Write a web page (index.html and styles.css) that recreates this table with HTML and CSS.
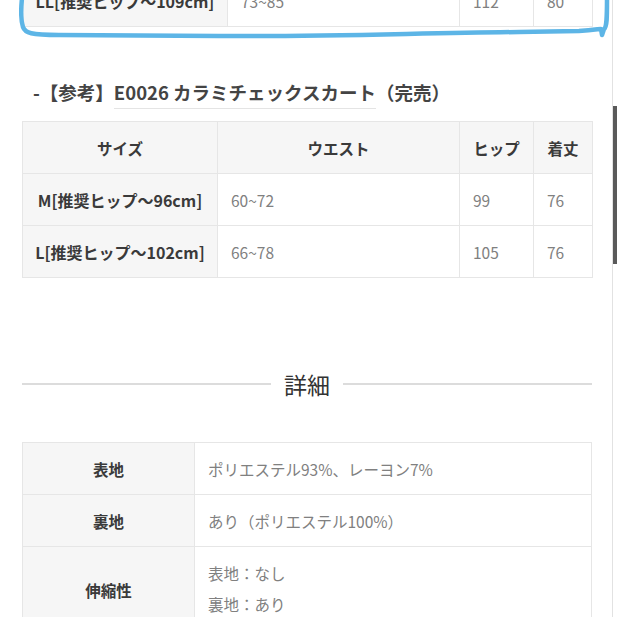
FILE: index.html
```html
<!DOCTYPE html>
<html lang="ja">
<head>
<meta charset="utf-8">
<link rel="stylesheet" href="styles.css">
</head>
<body>
<div class="page">
  <div class="top-wrap">
    <table class="size-table top-table">
      <colgroup><col class="c1b"><col class="c2b"><col class="c3"><col class="c4"></colgroup>
      <tr><th class="rowh">LL[推奨ヒップ〜109cm]</th><td>73~85</td><td>112</td><td>80</td></tr>
    </table>
    <svg class="marker" width="600" height="50" viewBox="0 0 600 50">
      <path d="M3 0 C2 10 1 20 4 29 C6 35 12 37 40 37 L200 38 C300 39 400 35 500 34 L560 33 C575 32 580 31 582 31 L583 37 L585 31 C588 29 588 20 588 0" fill="none" stroke="#5db5e6" stroke-width="4.5" stroke-linecap="round" stroke-linejoin="round"/>
    </svg>
  </div>

  <h3 class="ref-title">-【参考】<span class="ref-link">E0026 カラミチェックスカート</span>（完売）</h3>

  <table class="size-table">
    <colgroup><col class="c1"><col class="c2"><col class="c3"><col class="c4"></colgroup>
    <tr><th>サイズ</th><th>ウエスト</th><th>ヒップ</th><th>着丈</th></tr>
    <tr><th class="rowh">M[推奨ヒップ〜96cm]</th><td>60~72</td><td>99</td><td>76</td></tr>
    <tr><th class="rowh">L[推奨ヒップ〜102cm]</th><td>66~78</td><td>105</td><td>76</td></tr>
  </table>

  <div class="divider"><span>詳細</span></div>

  <table class="detail-table">
    <colgroup><col class="d1"><col class="d2"></colgroup>
    <tr><th>表地</th><td>ポリエステル93%、レーヨン7%</td></tr>
    <tr><th>裏地</th><td>あり（ポリエステル100%）</td></tr>
    <tr><th>伸縮性</th><td class="multi">表地：なし<br>裏地：あり</td></tr>
  </table>
</div>
<div class="scrollbar"><div class="thumb"></div></div>
</body>
</html>
```

FILE: styles.css
```css
html, body {
  margin: 0;
  padding: 0;
  background: #fff;
  overflow: hidden;
}
body {
  font-family: "Noto Sans CJK JP", "Noto Sans", sans-serif;
  color: #333;
}
.page {
  width: 570px;
  margin-left: 22px;
}
.top-wrap {
  position: relative;
  margin-top: -26px;
}
.marker {
  position: absolute;
  left: -3px;
  top: 24px;
}
table {
  border-collapse: collapse;
  width: 570px;
  table-layout: fixed;
}
.c1 { width: 195px; }
.c1b { width: 205px; }
.c2 { width: 242px; }
.c2b { width: 232px; }
.c3 { width: 74px; }
.c4 { width: 59px; }
.d1 { width: 172px; }
.size-table th, .size-table td,
.detail-table th, .detail-table td {
  border: 1px solid #e6e6e6;
  height: 52px;
  padding: 0 13px;
  font-size: 15.5px;
  box-sizing: border-box;
}
.size-table th, .detail-table th {
  background: #f6f6f6;
  font-weight: 700;
  color: #3a3a3a;
  text-align: center;
  white-space: nowrap;
  padding: 0 4px;
}
.size-table th.rowh {
  font-size: 16px;
}
.size-table td, .detail-table td {
  color: #808080;
  font-weight: 400;
  text-align: left;
}
.ref-title {
  margin: 51px 0 15px 11px;
  font-size: 18.5px;
  font-weight: 700;
  color: #444;
  line-height: 28px;
}
.ref-link {
  border-bottom: 1px solid #e4e4e4;
  padding-bottom: 3px;
}
.divider {
  margin: 86px 0 0 0;
  display: flex;
  align-items: center;
  gap: 13px;
  height: 40px;
}
.divider::before, .divider::after {
  content: "";
  flex: 1;
  height: 2px;
  background: #dcdcdc;
}
.divider span {
  font-size: 23px;
  color: #333;
}
.detail-table {
  margin-top: 38px;
}
.detail-table td.multi {
  line-height: 31px;
  padding-top: 11px;
  padding-bottom: 12px;
}
.scrollbar {
  position: fixed;
  right: 0;
  top: 0;
  width: 5px;
  height: 617px;
  border-left: 1px solid #e2e2e2;
  box-sizing: border-box;
}
.thumb {
  position: absolute;
  left: 0;
  top: 106px;
  width: 4px;
  height: 158px;
  background: #5a5a5a;
}
```
